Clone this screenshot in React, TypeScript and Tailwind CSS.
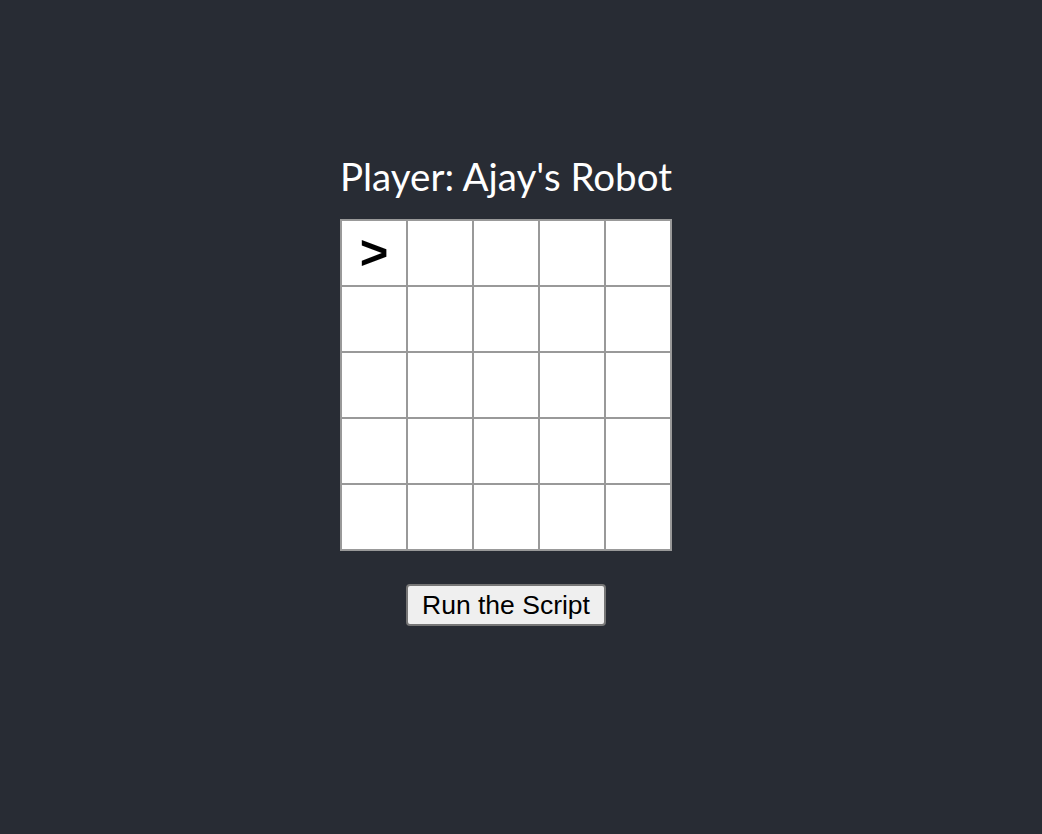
const cells = Array.from({ length: 25 }, (_, i) => i)

const App = () => {
    return (
        <div className="min-h-screen bg-[#282c34] flex flex-col items-center pt-[152px] pr-[30px]">
            <h1 className="text-white text-[38.5px] leading-[48px] font-['Lato',sans-serif] font-normal">
                Player: Ajay's Robot
            </h1>
            <div className="mt-[19px] grid grid-cols-5 border border-[#999999] bg-white">
                {cells.map((i) => (
                    <div key={i} className="w-[66px] h-[66px] border border-[#999999] flex items-center justify-center">
                        {i === 0 && (
                            <span className="text-[49px] font-bold text-black font-['Liberation_Sans',sans-serif] leading-none pb-[2px]">&gt;</span>
                        )}
                    </div>
                ))}
            </div>
            <button className="mt-[33px] w-[200px] h-[42px] bg-[#efefef] border-2 border-[#767676] rounded-[4px] text-[26.5px] leading-none text-black font-['Liberation_Sans',sans-serif]">
                Run the Script
            </button>
        </div>
    )
}

export default App
